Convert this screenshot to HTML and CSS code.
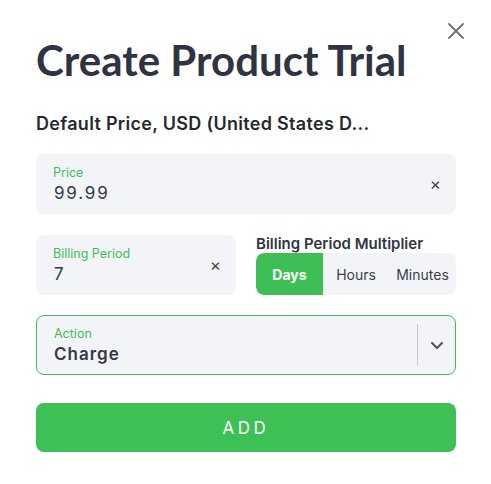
FILE: index.html
```html
<!DOCTYPE html>
<html lang="en">
<head>
    <meta charset="UTF-8">
    <meta name="viewport" content="width=device-width, initial-scale=1.0">
    <title>Create Product Trial</title>
    <link rel="stylesheet" href="styles.css">
</head>
<body>
    <div class="modal">
        <button class="close" aria-label="Close">
            <svg width="16" height="16" viewBox="0 0 16 16"><path d="M1 1L15 15M15 1L1 15" stroke="#6b6f7a" stroke-width="1.8" stroke-linecap="round"/></svg>
        </button>
        <h1>Create Product Trial</h1>
        <h2>Default Price, USD (United States D...</h2>

        <div class="field">
            <div class="field-body">
                <label>Price</label>
                <div class="value value-num">99.99</div>
            </div>
            <span class="clear">&times;</span>
        </div>

        <div class="row">
            <div class="field field-half">
                <div class="field-body">
                    <label>Billing Period</label>
                    <div class="value value-num">7</div>
                </div>
                <span class="clear">&times;</span>
            </div>
            <div class="multiplier">
                <div class="multiplier-label">Billing Period Multiplier</div>
                <div class="toggle">
                    <span class="toggle-item active">Days</span>
                    <span class="toggle-item">Hours</span>
                    <span class="toggle-item">Minutes</span>
                </div>
            </div>
        </div>

        <div class="field select">
            <div class="field-body">
                <label>Action</label>
                <div class="value value-select">Charge</div>
            </div>
            <span class="divider"></span>
            <span class="chevron">
                <svg width="14" height="10" viewBox="0 0 14 10"><path d="M2 3L7 8L12 3" fill="none" stroke="#555a63" stroke-width="2.2" stroke-linecap="round" stroke-linejoin="round"/></svg>
            </span>
        </div>

        <button class="add">ADD</button>
    </div>
</body>
</html>
```

FILE: styles.css
```css
body {
    margin: 0;
    font-family: "Inter", "Noto Sans", sans-serif;
    background-color: #fff;
    color: #2f3542;
}
.modal {
    position: relative;
    width: 420px;
    padding: 36px 35px 0 36px;
}
.close {
    position: absolute;
    top: 23px;
    right: 27px;
    background: none;
    border: none;
    padding: 0;
    cursor: pointer;
}
h1 {
    margin: 0;
    font-family: "Lato", sans-serif;
    font-size: 42px;
    font-weight: 700;
    line-height: 48px;
    color: #2e3441;
}
h2 {
    margin: 28px 0 0;
    font-size: 18px;
    font-weight: 600;
    line-height: 24px;
    letter-spacing: 0.3px;
    color: #262a30;
}
.field {
    display: flex;
    align-items: center;
    height: 60px;
    margin-top: 18px;
    padding: 0 15px 0 17px;
    box-sizing: border-box;
    background-color: #f3f4f8;
    border-radius: 8px;
}
.field-body {
    flex: 1;
}
label {
    display: block;
    font-size: 12.5px;
    line-height: 15px;
    color: #3dbf56;
}
.value {
    margin-top: 2px;
    font-size: 17px;
    line-height: 22px;
    color: #343944;
}
.value-num {
    letter-spacing: 1.8px;
    padding-left: 1px;
}
.clear {
    font-size: 17px;
    color: #444;
}
.row {
    display: flex;
    gap: 20px;
    margin-top: 21px;
}
.field-half {
    width: 200px;
    margin-top: 0;
}
.multiplier {
    flex: 1;
}
.multiplier-label {
    font-size: 15px;
    font-weight: 600;
    line-height: 16px;
    color: #2f3542;
    margin-top: 1px;
}
.toggle {
    display: flex;
    height: 42px;
    margin-top: 1px;
    background-color: #f3f4f8;
    border-radius: 8px;
    overflow: hidden;
}
.toggle-item {
    display: flex;
    align-items: center;
    justify-content: center;
    font-size: 14px;
    color: #3a3f4a;
}
.toggle-item:nth-child(1) { width: 67px; }
.toggle-item:nth-child(2) { width: 66px; }
.toggle-item:nth-child(3) { flex: 1; }
.toggle-item.active {
    background-color: #3dbf56;
    color: #fff;
    font-weight: 700;
    border-radius: 8px 0 0 8px;
}
.select {
    margin-top: 20px;
    border: 1px solid #3dbf56;
    padding-right: 0;
}
.value-select {
    font-weight: 600;
    letter-spacing: 1px;
}
.divider {
    width: 1px;
    height: 42px;
    background-color: #c8cacf;
}
.chevron {
    display: flex;
    justify-content: center;
    width: 37px;
}
.add {
    display: block;
    width: 100%;
    height: 49px;
    margin-top: 28px;
    background-color: #3dc156;
    color: #fff;
    border: none;
    border-radius: 8px;
    font-family: inherit;
    font-size: 17px;
    letter-spacing: 3.5px;
    cursor: pointer;
}
```
